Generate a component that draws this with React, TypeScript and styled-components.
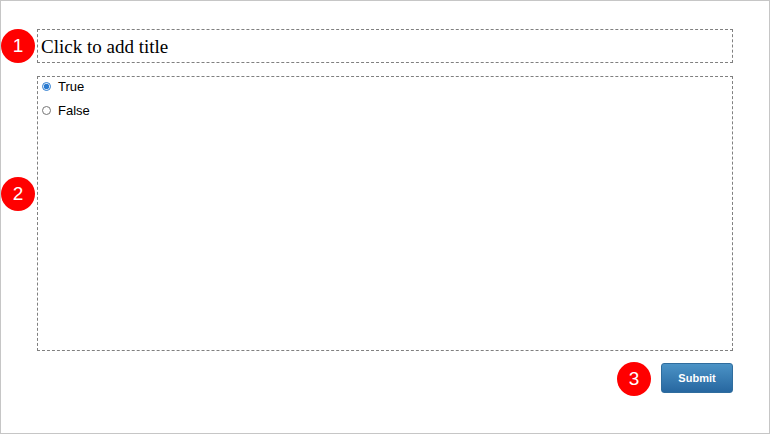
import React from 'react';
import styled, { createGlobalStyle } from "styled-components";

const GlobalStyle = createGlobalStyle`
  html, body {
    margin: 0;
    padding: 0;
    background: #fff;
  }
  * {
    box-sizing: border-box;
  }
`;

const App = () => {
  return (
    <>
      <GlobalStyle/>
      <Frame>
        <Section>
          <Badge top={0}>1</Badge>
          <TitleBox>Click to add title</TitleBox>
        </Section>
        <Section>
          <Badge top={101}>2</Badge>
          <AnswerBox>
            <Choice>
              <Radio type="radio" name="tf" defaultChecked/>
              <ChoiceLabel>True</ChoiceLabel>
            </Choice>
            <Choice>
              <Radio type="radio" name="tf"/>
              <ChoiceLabel>False</ChoiceLabel>
            </Choice>
          </AnswerBox>
        </Section>
        <Footer>
          <FooterBadge>3</FooterBadge>
          <SubmitButton>Submit</SubmitButton>
        </Footer>
      </Frame>
    </>
  );
};

export default App;

const Frame = styled.div`
  width: 770px;
  height: 434px;
  border: 1px solid #c6c6c6;
  padding: 28px 36px 0 36px;
  display: flex;
  flex-direction: column;
  gap: 13px;
`;

const Section = styled.div`
  position: relative;
`;

const Badge = styled.div<{ top: number }>`
  position: absolute;
  left: -36px;
  top: ${p => p.top}px;
  width: 34px;
  height: 34px;
  border-radius: 50%;
  background: #ff0000;
  color: #fff;
  font-family: "Liberation Sans", Arial, sans-serif;
  font-size: 19px;
  display: flex;
  align-items: center;
  justify-content: center;
`;

const TitleBox = styled.div`
  height: 34px;
  border: 1px dashed #808080;
  padding: 6px 0 0 3px;
  font-family: "Liberation Serif", "Times New Roman", serif;
  font-size: 19px;
  color: #000;
`;

const AnswerBox = styled.div`
  height: 275px;
  border: 1px dashed #808080;
  padding: 0 0 0 3px;
  display: flex;
  flex-direction: column;
  gap: 6px;
`;

const Choice = styled.label`
  display: flex;
  align-items: center;
  height: 18px;
  gap: 7px;
`;

const Radio = styled.input`
  margin: 0 0 0 1px;
  width: 9px;
  height: 9px;
  accent-color: #2b7bd0;
`;

const ChoiceLabel = styled.span`
  font-family: "Liberation Sans", Arial, sans-serif;
  font-size: 13px;
  color: #000;
`;

const Footer = styled.div`
  display: flex;
  justify-content: flex-end;
  align-items: center;
  gap: 10px;
  margin-top: -4px;
`;

const FooterBadge = styled.div`
  width: 34px;
  height: 34px;
  border-radius: 50%;
  background: #ff0000;
  color: #fff;
  font-family: "Liberation Sans", Arial, sans-serif;
  font-size: 19px;
  display: flex;
  align-items: center;
  justify-content: center;
  margin-top: 2px;
`;

const SubmitButton = styled.button`
  width: 72px;
  height: 30px;
  border: 1px solid #2f6d9e;
  border-radius: 3px;
  background: linear-gradient(to bottom, #4b93c6, #2767a0);
  color: #fff;
  font-family: "Liberation Sans", Arial, sans-serif;
  font-size: 11px;
  font-weight: bold;
  cursor: pointer;
  padding: 0;
`;
